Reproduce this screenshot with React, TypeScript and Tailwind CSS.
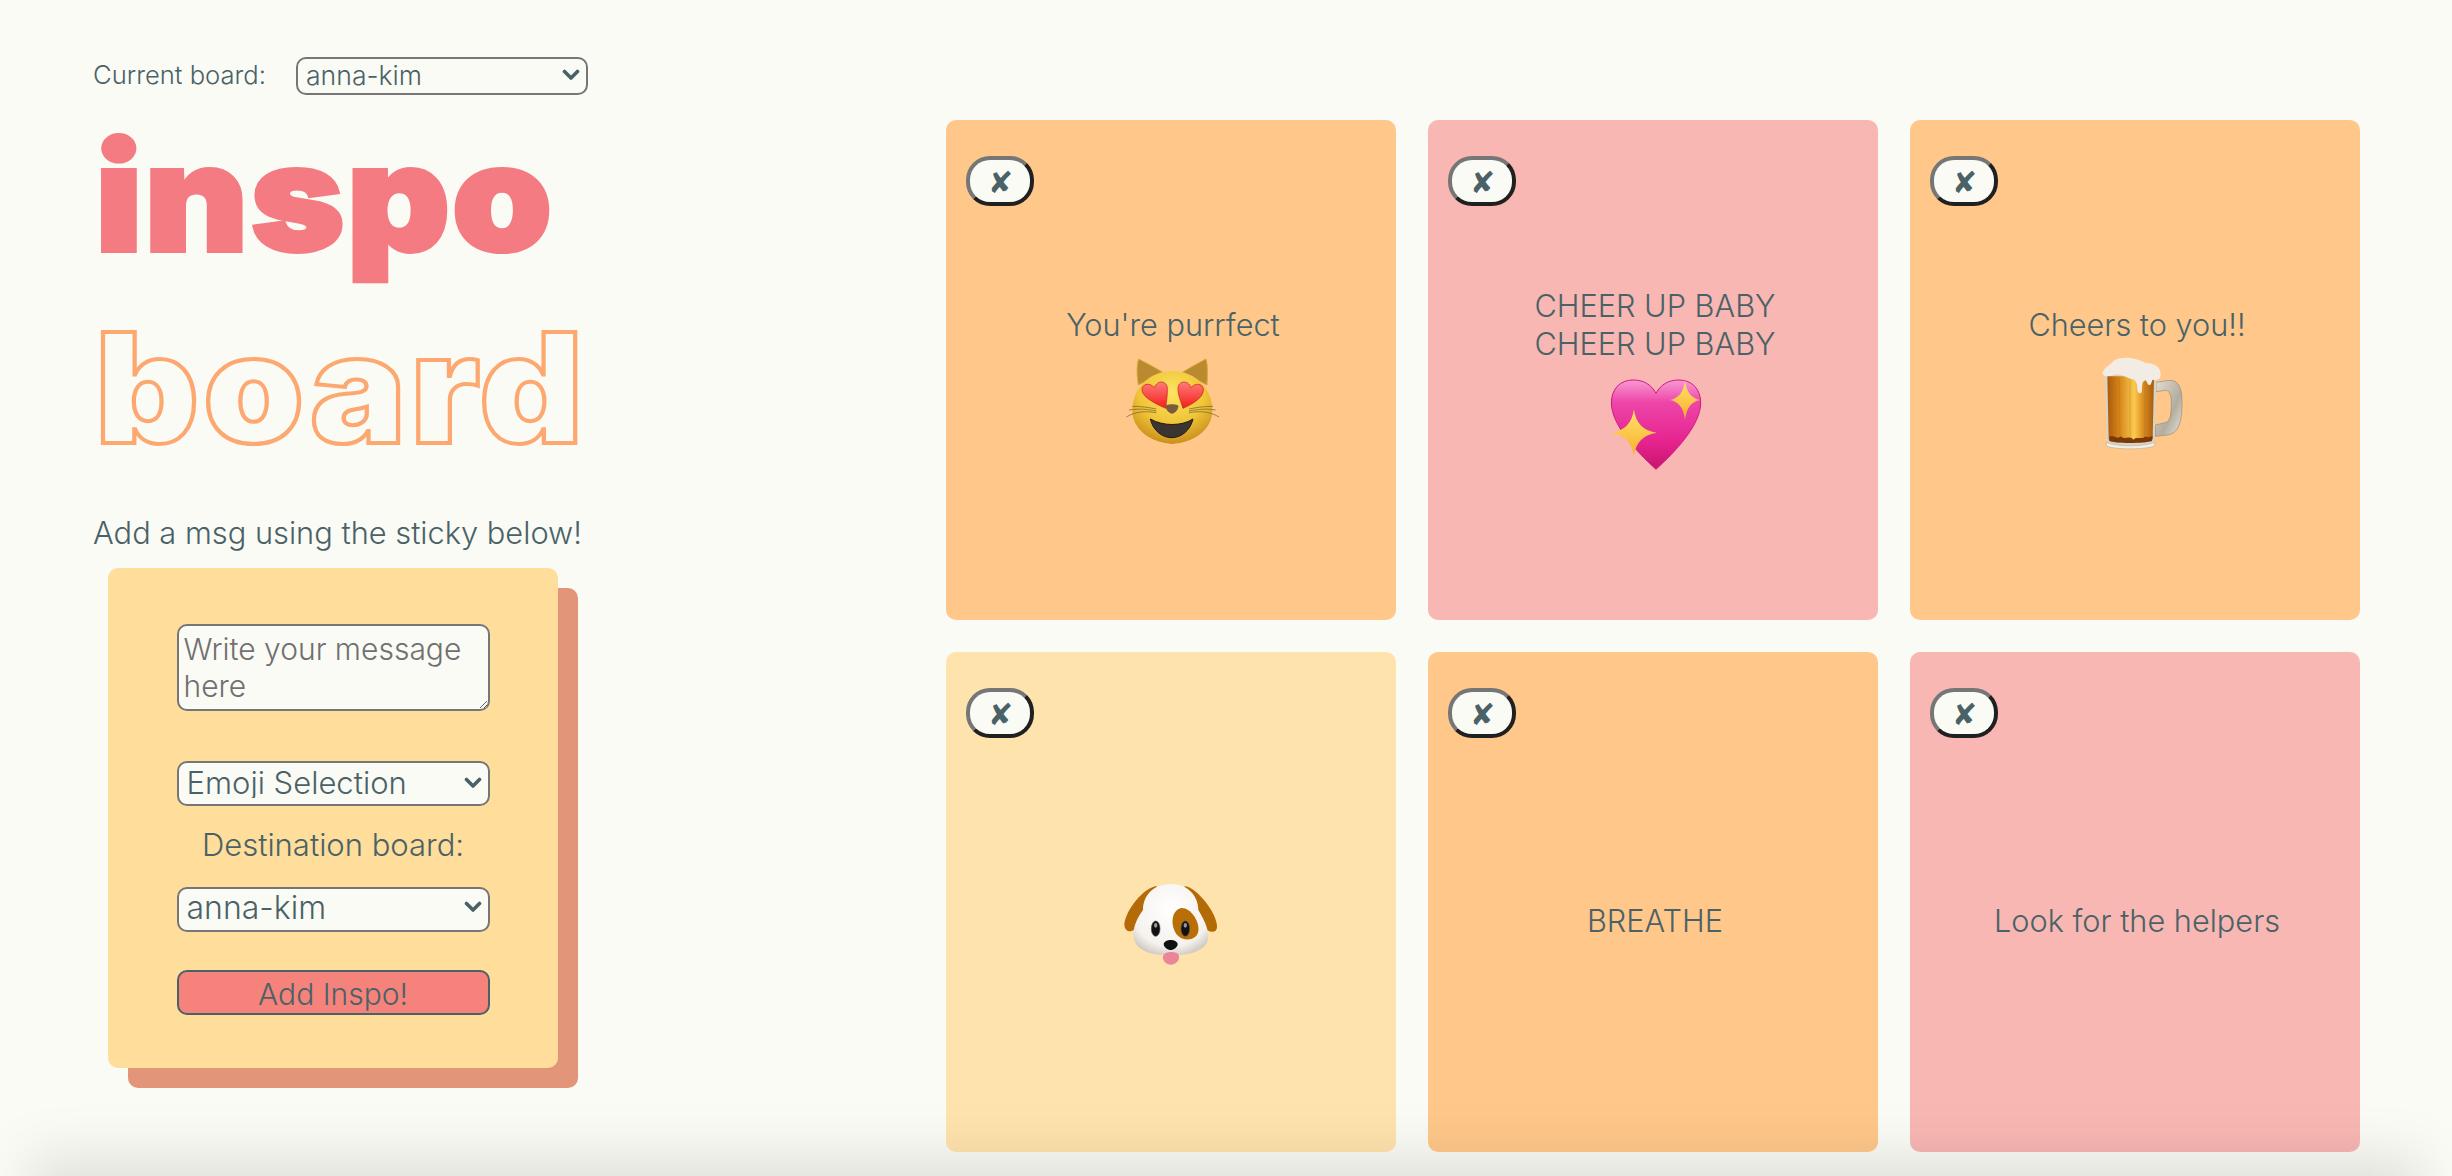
import React from "react";

const Cat = () => (
  <svg width="120" height="118" viewBox="0 0 360 354">
    <defs>
      <radialGradient id="catHead" cx="50%" cy="30%" r="70%">
        <stop offset="0" stopColor="#fde463" />
        <stop offset="0.6" stopColor="#f0c436" />
        <stop offset="1" stopColor="#c98f1c" />
      </radialGradient>
      <linearGradient id="catHeart" x1="0" y1="0" x2="0" y2="1">
        <stop offset="0" stopColor="#ff7a7a" />
        <stop offset="1" stopColor="#f2201c" />
      </linearGradient>
    </defs>
    <path d="M76 108 C70 70 72 45 77 30 C100 42 125 55 150 70Z" fill="#b98a30" stroke="#d9aa3a" strokeWidth="3" />
    <path d="M282 108 C284 70 284 45 279 30 C256 42 232 55 208 70Z" fill="#b98a30" stroke="#d9aa3a" strokeWidth="3" />
    <path d="M178 66 C108 66 58 120 58 184 C58 248 122 282 178 285 C234 282 298 248 298 184 C298 120 248 66 178 66Z" fill="url(#catHead)" />
    <path d="M158 178 C118 160 86 142 87 120 C88 104 112 100 124 116 C132 92 162 94 163 118 C164 136 160 158 158 178Z" fill="url(#catHeart)" stroke="#c91612" strokeWidth="2" />
    <path d="M210 178 C250 160 272 142 271 120 C270 104 246 100 234 116 C226 92 196 94 195 118 C194 136 204 158 210 178Z" fill="url(#catHeart)" stroke="#c91612" strokeWidth="2" />
    <path d="M158 172 C158 164 196 164 196 172 C196 184 184 194 177 194 C170 194 158 184 158 172Z" fill="#7b5b3d" />
    <path d="M112 210 C150 232 206 232 240 210 C232 245 204 266 176 266 C148 266 120 245 112 210Z" fill="#3b3530" stroke="#1f1a16" strokeWidth="3" />
    <g stroke="#6e5a30" strokeWidth="2" fill="none">
      <path d="M58 172 C85 172 105 175 130 180" />
      <path d="M48 183 C80 178 105 181 130 186" />
      <path d="M40 204 C70 186 100 186 130 191" />
      <path d="M300 172 C273 172 253 175 228 180" />
      <path d="M308 183 C280 178 253 181 228 186" />
      <path d="M318 204 C288 186 258 186 228 191" />
    </g>
  </svg>
);

const sparkle = (cx: number, cy: number, rx: number, ry: number) =>
  `M${cx} ${cy - ry} Q${cx + rx * 0.12} ${cy - ry * 0.12} ${cx + rx} ${cy} Q${cx + rx * 0.12} ${cy + ry * 0.12} ${cx} ${cy + ry} Q${cx - rx * 0.12} ${cy + ry * 0.12} ${cx - rx} ${cy} Q${cx - rx * 0.12} ${cy - ry * 0.12} ${cx} ${cy - ry}Z`;

const Heart = () => (
  <svg width="100" height="100" viewBox="0 0 100 100">
    <defs>
      <linearGradient id="pinkHeart" x1="0" y1="0" x2="0" y2="1">
        <stop offset="0" stopColor="#f79ad2" />
        <stop offset="0.25" stopColor="#ee45a8" />
        <stop offset="0.7" stopColor="#e5238f" />
        <stop offset="1" stopColor="#c8146c" />
      </linearGradient>
      <linearGradient id="spark" x1="0" y1="0" x2="0" y2="1">
        <stop offset="0" stopColor="#ffe46a" />
        <stop offset="1" stopColor="#f9ad2e" />
      </linearGradient>
    </defs>
    <path d="M51 16.3 C46 7 38 3 28 3 C15 3 6.4 12 6.4 26 C6.4 48 32 75 51 92.3 C70 75 95.7 48 95.7 26 C95.7 12 87 3 74 3 C64 3 56 7 51 16.3Z" fill="url(#pinkHeart)" stroke="#d11a84" strokeWidth="1" />
    <path d={sparkle(28.9, 55.7, 23, 23.3)} fill="url(#spark)" />
    <path d={sparkle(80, 23, 15, 20)} fill="url(#spark)" />
  </svg>
);

const Beer = () => (
  <svg width="130" height="138" viewBox="-24 0 390 414">
    <defs>
      <linearGradient id="beerFill" x1="0" y1="0" x2="1" y2="0">
        <stop offset="0" stopColor="#a85a0c" />
        <stop offset="0.22" stopColor="#d07f14" />
        <stop offset="0.58" stopColor="#fbc94f" />
        <stop offset="0.75" stopColor="#dd9224" />
        <stop offset="1" stopColor="#a85a0c" />
      </linearGradient>
      <linearGradient id="handle" x1="0" y1="0" x2="1" y2="1">
        <stop offset="0" stopColor="#e2ddd1" />
        <stop offset="0.6" stopColor="#b3ad9f" />
        <stop offset="1" stopColor="#e9e5da" />
      </linearGradient>
    </defs>
    <path d="M228 130 L268 124 C296 124 306 145 306 190 C306 250 296 284 262 288 L226 292 L226 258 L252 252 C270 250 274 232 274 190 C274 168 268 154 256 154 L228 158Z" fill="url(#handle)" stroke="#8f897c" strokeWidth="2" />
    <path d="M74 108 L230 108 L224 300 C224 314 210 324 150 325 C92 324 80 314 80 300Z" fill="#d9d3c4" />
    <path d="M82 112 L222 112 L218 298 C218 306 206 312 150 312 C94 312 86 306 86 298Z" fill="url(#beerFill)" />
    <path d="M118 118 L120 290 M150 118 L150 296 M196 118 L194 290" stroke="#8a4b0c" strokeOpacity="0.25" strokeWidth="2" />
    <path d="M88 294 C98 284 110 304 122 292 C132 304 148 288 160 302 C172 290 186 304 196 292 C206 298 212 292 218 290 L216 306 C190 314 110 314 88 306Z" fill="#7a3a08" />
    <path d="M78 310 C110 324 190 324 226 310 L222 322 C190 332 110 332 80 322Z" fill="#f2efe8" stroke="#8f897c" strokeWidth="1" />
    <path d="M68 100 C76 82 92 78 100 66 C124 50 170 56 196 72 C222 72 244 84 242 110 C240 124 226 124 218 122 C214 128 214 138 208 138 C202 138 202 128 196 124 C188 128 186 132 186 154 C186 166 174 166 172 154 C172 140 170 126 162 122 C140 118 130 106 108 106 C92 112 66 118 68 100Z" fill="#f3ece4" />
  </svg>
);

const Dog = () => (
  <svg width="130" height="110" viewBox="3 -12 390 330">
    <defs>
      <radialGradient id="dogHead" cx="50%" cy="35%" r="75%">
        <stop offset="0" stopColor="#ffffff" />
        <stop offset="0.7" stopColor="#f5f2ee" />
        <stop offset="1" stopColor="#bdb7ae" />
      </radialGradient>
    </defs>
    <path d="M150 48 C110 52 56 120 52 162 C52 184 70 190 82 178 L118 110Z" fill="#b46a06" />
    <path d="M232 48 C270 52 330 130 330 170 C330 188 310 190 298 178 L262 110Z" fill="#b46a06" />
    <path d="M192 42 C140 42 108 76 108 120 C86 150 78 176 80 200 C84 236 120 256 192 256 C262 256 302 236 304 200 C304 176 292 150 274 120 C274 76 240 42 192 42Z" fill="url(#dogHead)" />
    <path d="M222 114 C250 112 278 152 274 184 C270 212 228 218 208 192 C190 166 192 122 222 114Z" fill="#b96e06" />
    <ellipse cx="146" cy="176" rx="13" ry="23" fill="#111" stroke="#555" strokeWidth="2" />
    <ellipse cx="235" cy="176" rx="13" ry="23" fill="#111" stroke="#555" strokeWidth="2" />
    <ellipse cx="146" cy="166" rx="5" ry="7" fill="#999" />
    <ellipse cx="235" cy="166" rx="5" ry="7" fill="#999" />
    <path d="M170 222 C174 206 208 206 212 222 C212 232 200 240 191 240 C182 240 170 232 170 222Z" fill="#111" />
    <path d="M168 258 C172 248 184 246 192 246 C202 246 214 248 216 258 C218 274 204 284 192 284 C178 284 166 274 168 258Z" fill="#ec8597" />
  </svg>
);

const Chevron = () => (
  <svg className="pointer-events-none absolute right-[8px] top-1/2 -translate-y-1/2" width="18" height="12" viewBox="0 0 18 12" fill="none">
    <path d="M2.5 2.5 L9 9 L15.5 2.5" stroke="#4a6267" strokeWidth="3.6" strokeLinecap="round" strokeLinejoin="round" />
  </svg>
);

function Picker({ value, className }: { value: string; className: string }) {
  return (
    <div className={`relative shrink-0 ${className}`}>
      <select className="h-full w-full appearance-none rounded-[10px] border-2 border-[#767676] bg-[#fbfbf6] pb-[2px] pl-[8px] leading-none">
        <option>{value}</option>
      </select>
      <Chevron />
    </div>
  );
}

const notes = [
  { bg: "bg-[#ffc88a]", lines: ["You're purrfect"], emoji: <Cat /> },
  { bg: "bg-[#f8b7b3]", lines: ["CHEER UP BABY", "CHEER UP BABY"], emoji: <Heart /> },
  { bg: "bg-[#ffc88a]", lines: ["Cheers to you!!"], emoji: <Beer /> },
  { bg: "bg-[#ffe3ad]", lines: [], emoji: <Dog /> },
  { bg: "bg-[#ffc88a]", lines: ["BREATHE"], emoji: null },
  { bg: "bg-[#f8b7b3]", lines: ["Look for the helpers"], emoji: null },
];

function Note({ bg, lines, emoji }: { bg: string; lines: string[]; emoji: React.ReactNode }) {
  return (
    <div className={`relative flex h-[500px] flex-col items-center justify-center rounded-[10px] pl-[4px] pt-[38px] ${bg}`}>
      <button className="absolute left-[20px] top-[36px] flex h-[50px] w-[68px] items-center justify-center rounded-[24px] border-4 border-t-[#767676] border-r-[#202020] border-b-[#202020] border-l-[#767676] bg-[#fbfbf6] pl-[1px] pt-[3px] font-['DejaVu_Sans'] text-[30px] leading-none text-[#4a6267]">
        ✘
      </button>
      <div className="flex flex-col items-center">
        {lines.map((l, i) => (
          <p key={i} className="text-center text-[30.7px] leading-[38px]">
            {l}
          </p>
        ))}
        {emoji && <div className="flex h-[128px] items-center justify-center">{emoji}</div>}
      </div>
    </div>
  );
}

export default function App() {
  return (
    <div className="relative flex h-screen w-full justify-between overflow-hidden bg-[#fbfbf6] pl-[93px] pr-[92px] pt-[56px] font-['Inter','Liberation_Sans',sans-serif] font-light text-[#4a6267]">
      <div className="flex w-[500px] flex-col">
        <div className="flex h-[38px] items-center gap-[31px]">
          <label className="w-[172px] whitespace-nowrap text-[25.6px]">Current board:</label>
          <Picker value="anna-kim" className="h-[38px] w-[292px] text-[26.6px]" />
        </div>
        <h1 className="mt-[16px] h-[175px] origin-left scale-x-[1.08] pl-[2px] text-[148px] font-black leading-[175px] tracking-[2px] text-[#f37b81] [-webkit-text-stroke:4px_#f37b81]">inspo</h1>
        <h1 className="mt-[16px] h-[175px] origin-left scale-x-[1.06] pl-[2px] text-[152px] font-black leading-[175px] tracking-[4px] text-transparent [-webkit-text-stroke:4px_#fca870]">board</h1>
        <p className="mt-[37px] whitespace-nowrap text-[30.8px] leading-[40px]">Add a msg using the sticky below!</p>
        <form className="ml-[15px] mt-[15px] flex h-[500px] w-[450px] flex-col items-center rounded-[10px] bg-[#ffdd9a] pt-[56px] shadow-[20px_20px_0_0_#e29578]">
          <textarea
            placeholder="Write your message here"
            className="h-[87px] w-[313px] rounded-[10px] border-2 border-[#767676] bg-[#fbfbf6] px-[5px] pt-[5px] text-[30px] leading-[37px] placeholder:text-[#707070]"
          />
          <Picker value="Emoji Selection" className="mt-[49px] h-[45px] w-[313px] text-[31px]" />
          <label className="mt-[20px] text-center text-[31px] leading-[40px]">Destination board:</label>
          <Picker value="anna-kim" className="mt-[19px] h-[45px] w-[313px] text-[32px]" />
          <button type="button" className="mt-[41px] h-[45px] w-[313px] shrink-0 rounded-[10px] border-2 border-[#4a6267] bg-[#f5837c] text-[30px]">
            Add Inspo!
          </button>
        </form>
      </div>
      <div className="mt-[64px] grid w-[1414px] shrink-0 grid-cols-[repeat(3,450px)] content-start gap-[32px]">
        {notes.map((n, i) => (
          <Note key={i} {...n} />
        ))}
      </div>
      <div className="pointer-events-none absolute bottom-[-60px] left-[30px] right-[30px] h-[80px] bg-black/10 blur-[26px]" />
    </div>
  );
}
